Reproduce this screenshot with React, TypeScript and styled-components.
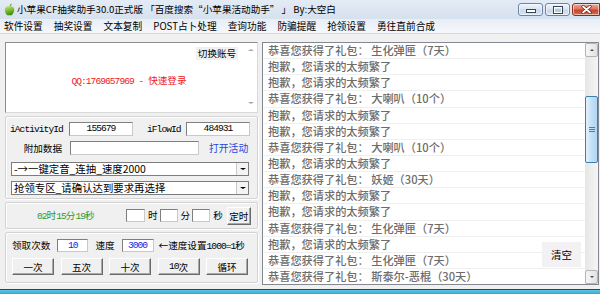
import React from 'react';
import styled, { createGlobalStyle } from 'styled-components';

const GlobalStyle = createGlobalStyle`
  html, body { margin: 0; padding: 0; }
  body {
    width: 600px;
    height: 294px;
    overflow: hidden;
    background: #f0f0f0;
    font-family: "Noto Sans CJK SC", "Liberation Sans", sans-serif;
    font-size: 9.6px;
    color: #000;
  }
  * { box-sizing: border-box; }
`;

const Window = styled.div`
  width: 600px;
  height: 294px;
  display: flex;
  flex-direction: column;
  background: #f0f0f0;
  overflow: hidden;
`;

// Title bar
const TitleBar = styled.div`
  flex: none;
  height: 19px;
  display: flex;
  align-items: flex-start;
  padding-left: 4px;
  background: linear-gradient(#e3ebf5, #d6e1ee);
`;

const AppIcon = styled.svg`
  margin-top: 3px;
  flex: none;
`;

const TitleText = styled.span`
  margin-left: 2px;
  font-size: 9.6px;
  line-height: 19px;
  white-space: nowrap;
`;

const WinButtons = styled.div`
  margin-left: auto;
  margin-top: 3px;
  display: flex;
  gap: 2px;
`;

const WinButton = styled.div<{ $kind: 'min' | 'max' | 'close' }>`
  width: ${p => (p.$kind === 'close' ? 28 : 25)}px;
  height: 13px;
  display: flex;
  align-items: center;
  justify-content: center;
  border: 1px solid ${p => (p.$kind === 'close' ? '#8c2d1c' : '#6f84a0')};
  border-radius: ${p => (p.$kind === 'close' ? '3px 0 0 3px' : '3px')};
  background: ${p =>
    p.$kind === 'close'
      ? 'linear-gradient(#eba898 0%, #dc7560 45%, #c6442a 55%, #d26c52 100%)'
      : 'linear-gradient(#eef4fb 0%, #dbe6f3 45%, #c8d8eb 55%, #d7e5f3 100%)'};
  box-shadow: inset 0 0 0 1px rgba(255, 255, 255, 0.55);
`;

// Menu
const MenuBar = styled.div`
  flex: none;
  height: 15px;
  display: flex;
  align-items: center;
  gap: 11px;
  padding-left: 4px;
  background: linear-gradient(#e8eef6, #f5f7fb);
  border-bottom: 1px solid #d5dae2;
`;

const MenuItem = styled.span`
  font-size: 9.7px;
  line-height: 14px;
  white-space: nowrap;
`;

// Client area
const Client = styled.div`
  flex: 1;
  display: flex;
  align-items: flex-start;
  gap: 4px;
  padding: 8px 1px 0 5px;
`;

const LeftColumn = styled.div`
  width: 253px;
  flex: none;
  display: flex;
  flex-direction: column;
  gap: 3px;
`;

const LoginBox = styled.div`
  height: 71px;
  display: flex;
  background: #fff;
  border: 1px solid;
  border-color: #8d8d8d #dadada #dadada #8d8d8d;
`;

const LoginContent = styled.div`
  flex: 1;
  display: flex;
  flex-direction: column;
  padding: 4px 6px 0 0;
`;

const SwitchButton = styled.div`
  align-self: flex-end;
  width: 42px;
  height: 13px;
  background: #f0f0f0;
  font-size: 9.6px;
  line-height: 13px;
  text-align: center;
`;

const QQLine = styled.div`
  margin-top: 14px;
  padding-left: 14px;
  text-align: center;
  color: #f01818;
  font-size: 9.6px;
  line-height: 13px;
  white-space: nowrap;
`;

// SimSun-like half-width latin: 4.8px advance
const Mono = styled.span`
  font-family: "Liberation Mono", monospace;
  font-size: 9.6px;
  letter-spacing: -0.96px;
`;

const ThinScroll = styled.div`
  width: 13px;
  display: flex;
  flex-direction: column;
  justify-content: space-between;
  align-items: center;
  padding: 6px 0 8px;
`;

const Arrow = styled.div<{ $dir: 'up' | 'down'; $color?: string; $size?: number }>`
  width: 0;
  height: 0;
  border-left: ${p => p.$size || 3}px solid transparent;
  border-right: ${p => p.$size || 3}px solid transparent;
  ${p =>
    p.$dir === 'up'
      ? `border-bottom: ${(p.$size || 3) - 0.5}px solid ${p.$color || '#a8a8a8'};`
      : `border-top: ${(p.$size || 3) - 0.5}px solid ${p.$color || '#a8a8a8'};`}
`;

const GroupBox = styled.div<{ $h: number; $pt: number }>`
  height: ${p => p.$h}px;
  padding: ${p => p.$pt}px 0 0 4px;
  display: flex;
  flex-direction: column;
  border: 1px solid #d3d3d3;
  border-radius: 2px;
  box-shadow: inset 1px 1px 0 #fff, 1px 1px 0 #fff;
`;

const Row = styled.div<{ $h: number; $mt?: number; $pl?: number }>`
  height: ${p => p.$h}px;
  margin-top: ${p => p.$mt || 0}px;
  padding-left: ${p => p.$pl || 0}px;
  display: flex;
  align-items: center;
  white-space: nowrap;
`;

const Label = styled.span<{ $w?: number; $ml?: number; $right?: boolean }>`
  flex: none;
  width: ${p => (p.$w ? `${p.$w}px` : 'auto')};
  margin-left: ${p => p.$ml || 0}px;
  padding-right: ${p => (p.$right ? 8 : 0)}px;
  text-align: ${p => (p.$right ? 'right' : 'left')};
  font-size: 9.6px;
  line-height: 13px;
`;

const MonoLabel = styled(Label)`
  font-family: "Liberation Mono", monospace;
  font-size: 9.6px;
  letter-spacing: -0.96px;
`;

const Field = styled.div<{ $w: number; $h?: number; $ml?: number; $blue?: boolean }>`
  flex: none;
  width: ${p => p.$w}px;
  height: ${p => p.$h || 14}px;
  margin-left: ${p => p.$ml || 0}px;
  background: #fff;
  border: 1px solid;
  border-color: #7f7f7f #c9c9c9 #c9c9c9 #7f7f7f;
  font-family: "Liberation Mono", monospace;
  font-size: 9.6px;
  letter-spacing: -0.96px;
  line-height: ${p => (p.$h || 14) - 2}px;
  text-align: center;
  color: ${p => (p.$blue ? '#1818e8' : '#000')};
`;

const LinkText = styled.span`
  margin-left: 10px;
  color: #1c48dc;
  font-size: 9.8px;
  line-height: 13px;
`;

const Combo = styled.div`
  width: 238px;
  height: 14px;
  margin-left: 1px;
  display: flex;
  align-items: center;
  background: #fff;
  border: 1px solid #7d7d7d;
`;

const ComboText = styled.span`
  flex: 1;
  padding-left: 2px;
  font-size: 10.4px;
  line-height: 12px;
  white-space: nowrap;
`;

const DropButton = styled.div`
  width: 12px;
  height: 12px;
  display: flex;
  align-items: center;
  justify-content: center;
  background: #f4f4f4;
  border-left: 1px solid #c8c8c8;
`;

const TimerText = styled.span`
  width: 58px;
  color: #2f9a2f;
  font-size: 9.6px;
  line-height: 13px;
`;

const Unit = styled.span`
  padding: 0 2px 0 3px;
  font-size: 9.6px;
  line-height: 13px;
`;

const RaisedButton = styled.div<{ $w: number; $h: number; $ml?: number }>`
  flex: none;
  width: ${p => p.$w}px;
  height: ${p => p.$h}px;
  margin-left: ${p => p.$ml || 0}px;
  display: flex;
  align-items: center;
  justify-content: center;
  background: #f0f0f0;
  border: 1px solid;
  border-color: #fff #6b6b6b #6b6b6b #fff;
  box-shadow: inset -1px -1px 0 #a8a8a8;
  font-size: 9.6px;
`;

const ButtonRow = styled.div`
  margin-top: 6px;
  padding-left: 2px;
  display: flex;
  gap: 6.5px;
`;

// Log list
const LogList = styled.div`
  position: relative;
  flex: 1;
  height: 243px;
  display: flex;
  background: #fff;
  border: 1px solid #848991;
`;

const LogRows = styled.div`
  flex: 1;
  overflow: hidden;
`;

const LogRow = styled.div`
  height: 16.15px;
  padding-left: 5px;
  border-bottom: 1px solid #efefef;
  color: #6c6c6c;
  font-size: 11.2px;
  font-weight: 500;
  line-height: 15px;
  white-space: nowrap;
`;

const ScrollBar = styled.div`
  width: 13px;
  flex: none;
  display: flex;
  flex-direction: column;
  background: linear-gradient(to right, #e6e6e6, #f5f5f5);
`;

const ScrollButton = styled.div`
  height: 14px;
  display: flex;
  align-items: center;
  justify-content: center;
  border: 1px solid #b4b4b4;
  border-radius: 2px;
  background: linear-gradient(to right, #f6f6f6, #e2e2e2);
`;

const Thumb = styled.div`
  margin-top: 39px;
  height: 67px;
  display: flex;
  flex-direction: column;
  align-items: center;
  justify-content: center;
  gap: 1px;
  border: 1px solid #3c7fb1;
  border-radius: 2px;
  background: linear-gradient(to right, #e3f1fc, #c3e0f7 50%, #b1d6f3);
`;

const Grip = styled.div`
  width: 6px;
  height: 1px;
  background: #4c7fa8;
`;

const Spacer = styled.div`
  flex: 1;
`;

const ClearButton = styled.div`
  position: absolute;
  right: 17px;
  bottom: 17px;
  width: 39px;
  height: 25px;
  display: flex;
  align-items: center;
  justify-content: center;
  background: #f3f1f3;
  font-size: 10.5px;
`;

const BottomFrame = styled.div`
  flex: none;
  height: 5px;
  border-top: 1px solid #1f4a5a;
  background: linear-gradient(#62c9e6, #3aa6cf);
`;

const menus = ['软件设置', '抽奖设置', '文本复制', 'POST占卜处理', '查询功能', '防骗提醒', '抢领设置', '勇往直前合成'];

const WIN = '恭喜您获得了礼包： ';
const FAIL = '抱歉，您请求的太频繁了';
const logs = [
  WIN + '生化弹匣（7天）',
  FAIL,
  FAIL,
  WIN + '大喇叭（10个）',
  FAIL,
  FAIL,
  WIN + '大喇叭（10个）',
  FAIL,
  WIN + '妖姬（30天）',
  FAIL,
  FAIL,
  WIN + '生化弹匣（7天）',
  FAIL,
  WIN + '生化弹匣（7天）',
  WIN + '斯泰尔-恶棍（30天）',
];

const AppleIcon = () => (
  <AppIcon width="11" height="13" viewBox="0 0 11 13">
    <defs>
      <linearGradient id="apple" x1="0" y1="0" x2="0.3" y2="1">
        <stop offset="0" stopColor="#c4f06a" />
        <stop offset="1" stopColor="#3f8f0c" />
      </linearGradient>
    </defs>
    <path
      d="M5.5 3.6C4 2.7 1 2.9 0.8 6.3C0.7 9.6 2.8 12.7 4.2 12.4C4.9 12.3 5.1 12 5.5 12C5.9 12 6.1 12.3 6.8 12.4C8.2 12.7 10.3 9.6 10.2 6.3C10 2.9 7 2.7 5.5 3.6Z"
      fill="url(#apple)"
    />
    <path d="M5.6 3.6C5.6 2.2 6.4 1 7.8 0.6C7.6 2 6.8 3 5.6 3.6Z" fill="#5c9c18" />
  </AppIcon>
);

export default function App() {
  return (
    <Window>
      <GlobalStyle />
      <TitleBar>
        <AppleIcon />
        <TitleText>小苹果CF抽奖助手30.0正式版 「百度搜索“小苹果活动助手” 」 By:大空白</TitleText>
        <WinButtons>
          <WinButton $kind="min">
            <svg width="10" height="6" viewBox="0 0 10 6">
              <rect x="0.5" y="2.5" width="9" height="3" fill="#fff" stroke="#34465c" />
            </svg>
          </WinButton>
          <WinButton $kind="max">
            <svg width="10" height="8" viewBox="0 0 10 8">
              <rect x="0.5" y="0.5" width="9" height="7" fill="#fff" stroke="#34465c" />
              <rect x="2" y="2.5" width="6" height="3.5" fill="#b9c9dc" />
            </svg>
          </WinButton>
          <WinButton $kind="close">
            <svg width="11" height="9" viewBox="0 0 11 9">
              <path d="M2 1.5L9 7.5M9 1.5L2 7.5" stroke="#6e1a0d" strokeWidth="3.2" strokeLinecap="round" />
              <path d="M2 1.5L9 7.5M9 1.5L2 7.5" stroke="#fff" strokeWidth="1.8" strokeLinecap="round" />
            </svg>
          </WinButton>
        </WinButtons>
      </TitleBar>

      <MenuBar>
        {menus.map(m => (
          <MenuItem key={m}>{m}</MenuItem>
        ))}
      </MenuBar>

      <Client>
        <LeftColumn>
          <LoginBox>
            <LoginContent>
              <SwitchButton>切换账号</SwitchButton>
              <QQLine>
                <Mono>QQ:1769657969 - </Mono>快速登录
              </QQLine>
            </LoginContent>
            <ThinScroll>
              <Arrow $dir="up" />
              <Arrow $dir="down" />
            </ThinScroll>
          </LoginBox>

          <GroupBox $h={83} $pt={5}>
            <Row $h={14}>
              <MonoLabel $w={59}>iActivityId</MonoLabel>
              <Field $w={64}>155679</Field>
              <MonoLabel $w={39} $ml={14}>iFlowId</MonoLabel>
              <Field $w={64}>484931</Field>
            </Row>
            <Row $h={14} $mt={5}>
              <Label $w={60} $right>附加数据</Label>
              <Field $w={129} />
              <LinkText>打开活动</LinkText>
            </Row>
            <Row $h={14} $mt={7}>
              <Combo>
                <ComboText>-→一键定音_连抽_速度2000</ComboText>
                <DropButton>
                  <Arrow $dir="down" $color="#000" />
                </DropButton>
              </Combo>
            </Row>
            <Row $h={14} $mt={5}>
              <Combo>
                <ComboText>抢领专区_请确认达到要求再选择</ComboText>
                <DropButton>
                  <Arrow $dir="down" $color="#000" />
                </DropButton>
              </Combo>
            </Row>
          </GroupBox>

          <GroupBox $h={27} $pt={0}>
            <Row $h={25} $pl={27}>
              <TimerText>
                <Mono>02</Mono>时<Mono>15</Mono>分<Mono>19</Mono>秒
              </TimerText>
              <Field $w={19} $h={13} $ml={31} />
              <Unit>时</Unit>
              <Field $w={18} $h={13} />
              <Unit>分</Unit>
              <Field $w={18} $h={13} />
              <Unit>秒</Unit>
              <RaisedButton $w={24} $h={18} $ml={2}>定时</RaisedButton>
            </Row>
          </GroupBox>

          <GroupBox $h={51} $pt={6}>
            <Row $h={13} $pl={2}>
              <Label>领取次数</Label>
              <Field $w={31} $h={13} $ml={7} $blue>10</Field>
              <Label $ml={7}>速度</Label>
              <Field $w={32} $h={13} $ml={7} $blue>3000</Field>
              <Label $ml={5}>
                ←速度设置<Mono>1000=1</Mono>秒
              </Label>
            </Row>
            <ButtonRow>
              <RaisedButton $w={42} $h={17}>一次</RaisedButton>
              <RaisedButton $w={42} $h={17}>五次</RaisedButton>
              <RaisedButton $w={42} $h={17}>十次</RaisedButton>
              <RaisedButton $w={42} $h={17}>
                <Mono>10</Mono>次
              </RaisedButton>
              <RaisedButton $w={42} $h={17}>循环</RaisedButton>
            </ButtonRow>
          </GroupBox>
        </LeftColumn>

        <LogList>
          <LogRows>
            {logs.map((l, i) => (
              <LogRow key={i}>{l}</LogRow>
            ))}
          </LogRows>
          <ScrollBar>
            <ScrollButton>
              <Arrow $dir="up" $color="#4d4d4d" $size={2.5} />
            </ScrollButton>
            <Thumb>
              <Grip />
              <Grip />
              <Grip />
            </Thumb>
            <Spacer />
            <ScrollButton>
              <Arrow $dir="down" $color="#4d4d4d" $size={2.5} />
            </ScrollButton>
          </ScrollBar>
          <ClearButton>清空</ClearButton>
        </LogList>
      </Client>

      <BottomFrame />
    </Window>
  );
}
